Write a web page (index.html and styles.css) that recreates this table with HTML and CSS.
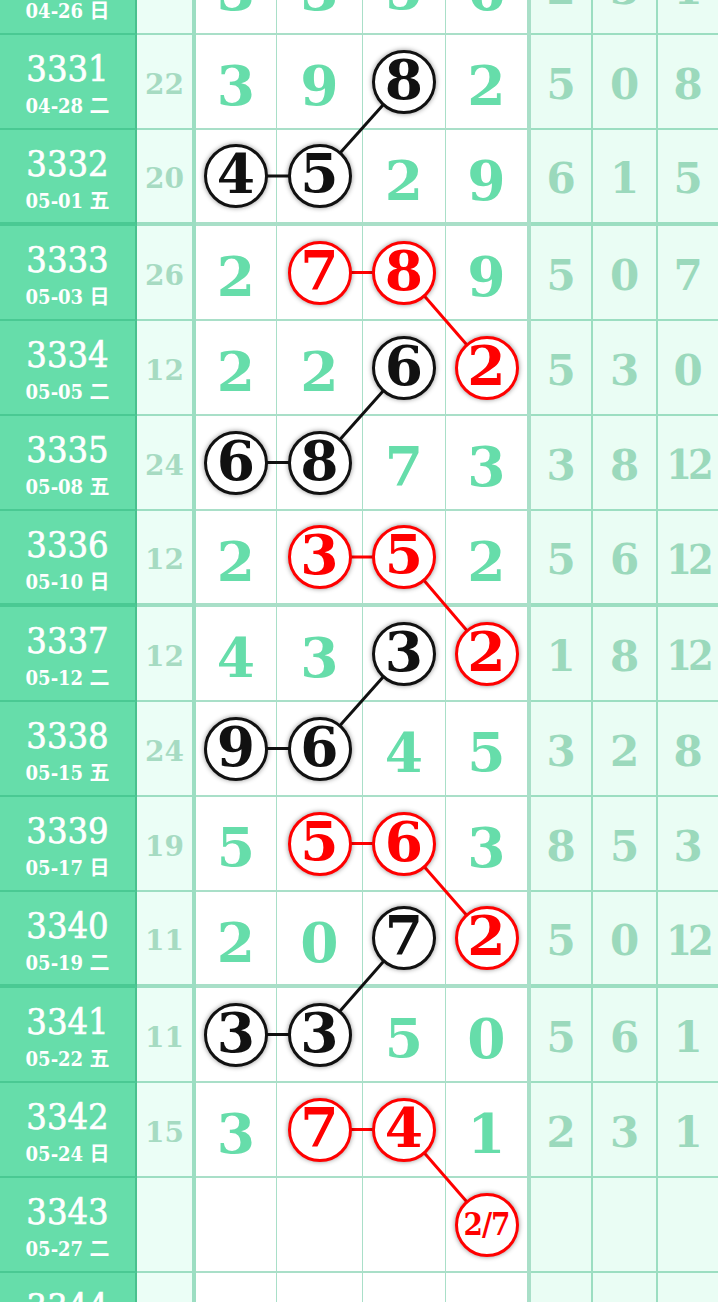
FILE: index.html
```html
<!DOCTYPE html>
<html lang="zh">
<head>
    <meta charset="UTF-8">
    <meta name="viewport" content="width=device-width, initial-scale=1.0">
    <title>走势图</title>
    <link rel="stylesheet" href="styles.css">
</head>
<body>

    <div class="chart" id="chart">
        <svg class="links" id="links"></svg>
    </div>

    <script>
        // issue, date, sum, four positions, tail values
        // "b8" = black ring, "r7" = red ring, "-" = empty cell
        var rows = [
            ['3330', '04-26 日', '17', '3 3 5 6', '2 3 1'],
            ['3331', '04-28 二', '22', '3 9 b8 2', '5 0 8'],
            ['3332', '05-01 五', '20', 'b4 b5 2 9', '6 1 5'],
            ['3333', '05-03 日', '26', '2 r7 r8 9', '5 0 7'],
            ['3334', '05-05 二', '12', '2 2 b6 r2', '5 3 0'],
            ['3335', '05-08 五', '24', 'b6 b8 7 3', '3 8 12'],
            ['3336', '05-10 日', '12', '2 r3 r5 2', '5 6 12'],
            ['3337', '05-12 二', '12', '4 3 b3 r2', '1 8 12'],
            ['3338', '05-15 五', '24', 'b9 b6 4 5', '3 2 8'],
            ['3339', '05-17 日', '19', '5 r5 r6 3', '8 5 3'],
            ['3340', '05-19 二', '11', '2 0 b7 r2', '5 0 12'],
            ['3341', '05-22 五', '11', 'b3 b3 5 0', '5 6 1'],
            ['3342', '05-24 日', '15', '3 r7 r4 1', '2 3 1'],
            ['3343', '05-27 二', '', '- - - r2/7', '- - -'],
            ['3344', '05-29 五', '', '- - - -', '- - -']
        ];

        // rings joined by a line, as "row:column"
        var paths = [
            ['b', '1:3 2:2 2:1'],
            ['r', '3:2 3:3 4:4'],
            ['b', '4:3 5:2 5:1'],
            ['r', '6:2 6:3 7:4'],
            ['b', '7:3 8:2 8:1'],
            ['r', '9:2 9:3 10:4'],
            ['b', '10:3 11:2 11:1'],
            ['r', '12:2 12:3 13:4']
        ];

        var chart = document.getElementById('chart');
        var links = document.getElementById('links');

        rows.forEach(function(row, r) {
            var line = document.createElement('div');
            line.className = 'row' + (Number(row[0]) % 4 === 0 ? ' group-end' : '');

            var html = '<div class="cell period"><span class="issue">' + row[0] + '</span>' +
                       '<span class="date">' + row[1] + '</span></div>';
            html += '<div class="cell sum">' + row[2] + '</div>';

            row[3].split(' ').forEach(function(v, i) {
                var cls = 'cell num' + (i === 3 ? ' edge' : '');
                var inner = v === '-' ? '' : v;
                if (v[0] === 'b' || v[0] === 'r') {
                    var val = v.slice(1);
                    cls += ' ringed';
                    inner = '<span class="ring ' + (v[0] === 'r' ? 'red' : 'black') +
                            (val.length > 1 ? ' small' : '') + '" id="c' + r + '-' + (i + 1) + '">' + val + '</span>';
                }
                html += '<div class="' + cls + '">' + inner + '</div>';
            });

            row[4].split(' ').forEach(function(v, i) {
                var cls = 'cell tail' + (i === 2 ? ' end' : '') + (v.length > 1 ? ' wide' : '');
                html += '<div class="' + cls + '">' + (v === '-' ? '' : v) + '</div>';
            });

            line.innerHTML = html;
            chart.insertBefore(line, links);
        });

        // Draw the connecting lines between ring centres
        var box = chart.getBoundingClientRect();

        function centre(key) {
            var b = document.getElementById('c' + key.replace(':', '-')).getBoundingClientRect();
            return [b.left + b.width / 2 - box.left, b.top + b.height / 2 - box.top];
        }

        paths.forEach(function(p) {
            var pts = p[1].split(' ');
            for (var i = 1; i < pts.length; i++) {
                var a = centre(pts[i - 1]);
                var b = centre(pts[i]);
                var seg = document.createElementNS('http://www.w3.org/2000/svg', 'line');
                seg.setAttribute('x1', a[0]);
                seg.setAttribute('y1', a[1]);
                seg.setAttribute('x2', b[0]);
                seg.setAttribute('y2', b[1]);
                seg.setAttribute('class', p[0] === 'r' ? 'red' : 'black');
                links.appendChild(seg);
            }
        });
    </script>

</body>
</html>
```

FILE: styles.css
```css
/* General Styles */
* {
    margin: 0;
    padding: 0;
    box-sizing: border-box;
}

body {
    width: 718px;
    height: 1302px;
    overflow: hidden;
    background-color: #fff;
    font-family: "DejaVu Serif", "Noto Sans CJK SC", serif;
}

/* Chart (scrolled so the first row is cut off) */
.chart {
    position: relative;
    margin-top: -60px;
}

.row {
    display: grid;
    grid-template-columns: 137px 59px 81px 86px 83px 85px 62px 65px 60px;
    height: 95px;
}

.row.group-end {
    height: 96px;
}

.cell {
    display: flex;
    align-items: center;
    justify-content: center;
    line-height: 1;
    border-bottom: 2px solid rgba(30, 170, 110, 0.38);
    border-right: 1px solid rgba(30, 170, 110, 0.38);
}

.group-end .cell {
    border-bottom-width: 4px;
}

/* Issue number + date */
.period {
    flex-direction: column;
    justify-content: flex-start;
    padding-top: 16px;
    background-color: #66ddaa;
    color: #fff;
    border-right: 2px solid rgba(20, 140, 90, 0.35);
}

.issue {
    font-family: "DejaVu Serif Condensed", "DejaVu Serif", serif;
    font-size: 36px;
    -webkit-text-stroke: 0.6px #fff;
}

.date {
    margin-top: 9px;
    font-family: "DejaVu Serif Condensed", "DejaVu Serif", "Noto Sans CJK SC", serif;
    font-size: 20px;
    font-weight: bold;
}

/* Sum column */
.sum {
    padding-top: 6px;
    background-color: #ebfef6;
    color: #a6dbc2;
    font-size: 28px;
    font-weight: bold;
    border-right-width: 4px;
}

/* Four positions */
.num {
    padding-top: 8px;
    background-color: #fff;
    color: #66ddaa;
    font-size: 55px;
    font-weight: bold;
}

.num.edge {
    border-right-width: 4px;
}

.num.ringed {
    padding-top: 0;
}

.ring {
    position: relative;
    z-index: 2;
    display: flex;
    align-items: center;
    justify-content: center;
    width: 64px;
    height: 64px;
    padding-bottom: 5px;
    border-radius: 50%;
    border: 3px solid #111;
    background-color: #fff;
    color: #111;
    box-shadow: 0 0 5px rgba(0, 0, 0, 0.45);
}

.ring.red {
    border-color: #f00;
    color: #f00;
}

.ring.small {
    padding-bottom: 0;
    font-family: "DejaVu Serif Condensed", "DejaVu Serif", serif;
    font-size: 31px;
    letter-spacing: -1px;
}

/* Tail columns */
.tail {
    padding-top: 6px;
    background-color: #eafdf4;
    color: #9bd9bc;
    font-size: 42px;
    font-weight: bold;
    border-right-width: 2px;
}

.tail.wide {
    font-family: "DejaVu Serif Condensed", "DejaVu Serif", serif;
    font-size: 41px;
    letter-spacing: -4px;
}

.tail.end {
    border-right: none;
}

/* Connecting lines */
.links {
    position: absolute;
    top: 0;
    left: 0;
    width: 100%;
    height: 100%;
    z-index: 1;
    pointer-events: none;
}

.links line {
    stroke-width: 3;
}

.links .black {
    stroke: #111;
}

.links .red {
    stroke: #f00;
}
```
